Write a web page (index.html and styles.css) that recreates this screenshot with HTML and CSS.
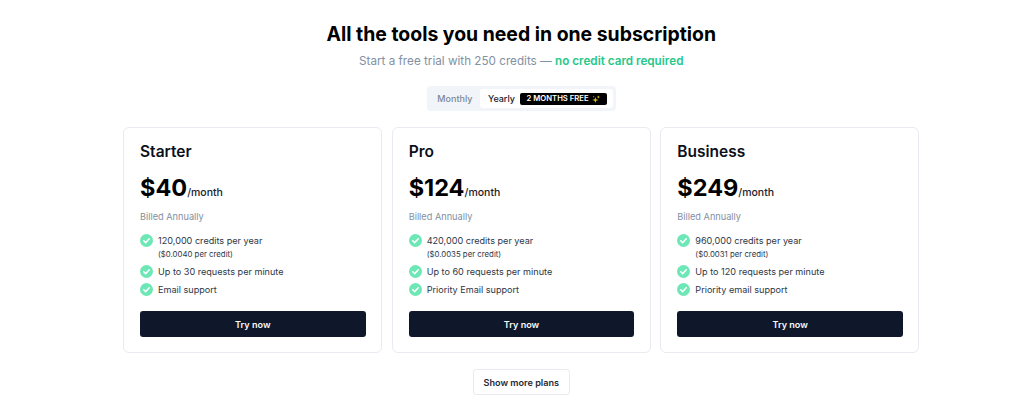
FILE: index.html
```html
<!DOCTYPE html>
<html lang="en">
<head>
<meta charset="utf-8">
<title>Pricing</title>
<link rel="stylesheet" href="styles.css">
</head>
<body>
<main class="page">
  <h1 class="title">All the tools you need in one subscription</h1>
  <p class="subtitle">Start a free trial with 250 credits — <strong class="accent">no credit card required</strong></p>
  <div class="toggle">
    <span class="tab">Monthly</span>
    <span class="tab tab-active">Yearly <span class="badge">2 MONTHS FREE <svg class="spark" viewBox="0 0 12 12"><path d="M5 3 6 6.5 9.5 7.5 6 8.5 5 12 4 8.5.5 7.5 4 6.5Z" fill="#e8c920"/><path d="M9.5 .5l.6 1.9 1.9.6-1.9.6-.6 1.9-.6-1.9L7 3l1.9-.6Z" fill="#e8c920"/><path d="M2.5 1l.4 1.1 1.1.4-1.1.4L2.5 4 2.1 2.9 1 2.5l1.1-.4Z" fill="#c9a91a"/></svg></span></span>
  </div>
  <section class="cards">
    <article class="card">
      <h2 class="plan">Starter</h2>
      <div class="price"><span class="amount">$40</span><span class="per">/month</span></div>
      <p class="billed">Billed Annually</p>
      <ul class="features">
        <li class="feature"><svg class="check" viewBox="0 0 14 14"><circle cx="7" cy="7" r="7" fill="#6ee7b7"/><path d="M4 7.3 6.1 9.3 10 5.2" fill="none" stroke="#fff" stroke-width="1.6" stroke-linecap="round" stroke-linejoin="round"/></svg><div>120,000 credits per year<small class="note">($0.0040 per credit)</small></div></li>
        <li class="feature"><svg class="check" viewBox="0 0 14 14"><circle cx="7" cy="7" r="7" fill="#6ee7b7"/><path d="M4 7.3 6.1 9.3 10 5.2" fill="none" stroke="#fff" stroke-width="1.6" stroke-linecap="round" stroke-linejoin="round"/></svg><div>Up to 30 requests per minute</div></li>
        <li class="feature"><svg class="check" viewBox="0 0 14 14"><circle cx="7" cy="7" r="7" fill="#6ee7b7"/><path d="M4 7.3 6.1 9.3 10 5.2" fill="none" stroke="#fff" stroke-width="1.6" stroke-linecap="round" stroke-linejoin="round"/></svg><div>Email support</div></li>
      </ul>
      <button class="cta">Try now</button>
    </article>
    <article class="card">
      <h2 class="plan">Pro</h2>
      <div class="price"><span class="amount">$124</span><span class="per">/month</span></div>
      <p class="billed">Billed Annually</p>
      <ul class="features">
        <li class="feature"><svg class="check" viewBox="0 0 14 14"><circle cx="7" cy="7" r="7" fill="#6ee7b7"/><path d="M4 7.3 6.1 9.3 10 5.2" fill="none" stroke="#fff" stroke-width="1.6" stroke-linecap="round" stroke-linejoin="round"/></svg><div>420,000 credits per year<small class="note">($0.0035 per credit)</small></div></li>
        <li class="feature"><svg class="check" viewBox="0 0 14 14"><circle cx="7" cy="7" r="7" fill="#6ee7b7"/><path d="M4 7.3 6.1 9.3 10 5.2" fill="none" stroke="#fff" stroke-width="1.6" stroke-linecap="round" stroke-linejoin="round"/></svg><div>Up to 60 requests per minute</div></li>
        <li class="feature"><svg class="check" viewBox="0 0 14 14"><circle cx="7" cy="7" r="7" fill="#6ee7b7"/><path d="M4 7.3 6.1 9.3 10 5.2" fill="none" stroke="#fff" stroke-width="1.6" stroke-linecap="round" stroke-linejoin="round"/></svg><div>Priority Email support</div></li>
      </ul>
      <button class="cta">Try now</button>
    </article>
    <article class="card">
      <h2 class="plan">Business</h2>
      <div class="price"><span class="amount">$249</span><span class="per">/month</span></div>
      <p class="billed">Billed Annually</p>
      <ul class="features">
        <li class="feature"><svg class="check" viewBox="0 0 14 14"><circle cx="7" cy="7" r="7" fill="#6ee7b7"/><path d="M4 7.3 6.1 9.3 10 5.2" fill="none" stroke="#fff" stroke-width="1.6" stroke-linecap="round" stroke-linejoin="round"/></svg><div>960,000 credits per year<small class="note">($0.0031 per credit)</small></div></li>
        <li class="feature"><svg class="check" viewBox="0 0 14 14"><circle cx="7" cy="7" r="7" fill="#6ee7b7"/><path d="M4 7.3 6.1 9.3 10 5.2" fill="none" stroke="#fff" stroke-width="1.6" stroke-linecap="round" stroke-linejoin="round"/></svg><div>Up to 120 requests per minute</div></li>
        <li class="feature"><svg class="check" viewBox="0 0 14 14"><circle cx="7" cy="7" r="7" fill="#6ee7b7"/><path d="M4 7.3 6.1 9.3 10 5.2" fill="none" stroke="#fff" stroke-width="1.6" stroke-linecap="round" stroke-linejoin="round"/></svg><div>Priority email support</div></li>
      </ul>
      <button class="cta">Try now</button>
    </article>
  </section>
  <button class="more">Show more plans</button>
</main>
</body>
</html>
```
FILE: styles.css
```css
* { box-sizing: border-box; }
html, body { margin: 0; height: 408px; overflow: hidden; background: #fff; }
body { font-family: Inter, "Liberation Sans", sans-serif; color: #0b0f19; }
.page { width: 796.5px; margin-left: 123px; display: flex; flex-direction: column; align-items: center; padding-top: 21px; }
.title { margin: 0; font-size: 19.4px; line-height: 26px; font-weight: 700; color: #000; white-space: nowrap; }
.subtitle { margin: 7px 0 0; font-size: 11.7px; line-height: 15px; color: #8390a2; white-space: nowrap; }
.accent { font-weight: 600; color: #26c88a; }
.toggle { margin-top: 17px; height: 25px; padding: 3px; background: #f1f5f9; border-radius: 4px; display: flex; align-items: stretch; font-size: 9px; font-weight: 500; }
.tab { display: flex; align-items: center; padding: 0 7.5px; color: #7b8798; }
.tab-active { background: #fff; color: #1a202c; border-radius: 3px; gap: 5px; padding: 0 6px 0 8px; }
.badge { display: flex; align-items: center; gap: 3.5px; height: 12px; padding: 0 6.5px; background: #000; color: #fff; font-size: 7.7px; font-weight: 600; border-radius: 2px; white-space: nowrap; }
.spark { width: 8px; height: 8px; }
.cards { width: 100%; margin-top: 16px; display: grid; grid-template-columns: repeat(3, 1fr); gap: 9.5px; }
.card { height: 226px; padding: 14px 15.5px 15px 16px; background: #fff; border: 1px solid #e8ebf1; border-radius: 6px; display: flex; flex-direction: column; }
.plan { margin: 0; font-size: 15.5px; line-height: 20px; font-weight: 600; color: #0b0f19; }
.price { margin-top: 11px; display: flex; align-items: baseline; line-height: 30px; }
.amount { font-size: 23.5px; font-weight: 700; color: #000; }
.per { font-size: 10.5px; font-weight: 500; color: #1a202c; }
.billed { margin: 3px 0 0; font-size: 9.2px; line-height: 12px; color: #8390a2; }
.features { margin: 11px 0 0; padding: 0; list-style: none; display: flex; flex-direction: column; gap: 5px; font-size: 9.1px; line-height: 13px; color: #2d3748; flex: 1; }
.feature { display: flex; gap: 5px; align-items: flex-start; }
.check { width: 13px; height: 13px; flex: none; }
.note { display: block; margin-top: 1px; font-size: 7.8px; line-height: 12px; color: #2d3748; }
.cta { height: 26px; border: 0; border-radius: 3px; background: #0f172a; color: #f8fafc; font: 600 9.1px Inter, "Liberation Sans", sans-serif; }
.more { margin-top: 16px; width: 97px; height: 26px; padding: 0; border: 1px solid #e8ebf1; border-radius: 3px; background: #fff; color: #1f2937; font: 600 9.1px Inter, "Liberation Sans", sans-serif; }
```
